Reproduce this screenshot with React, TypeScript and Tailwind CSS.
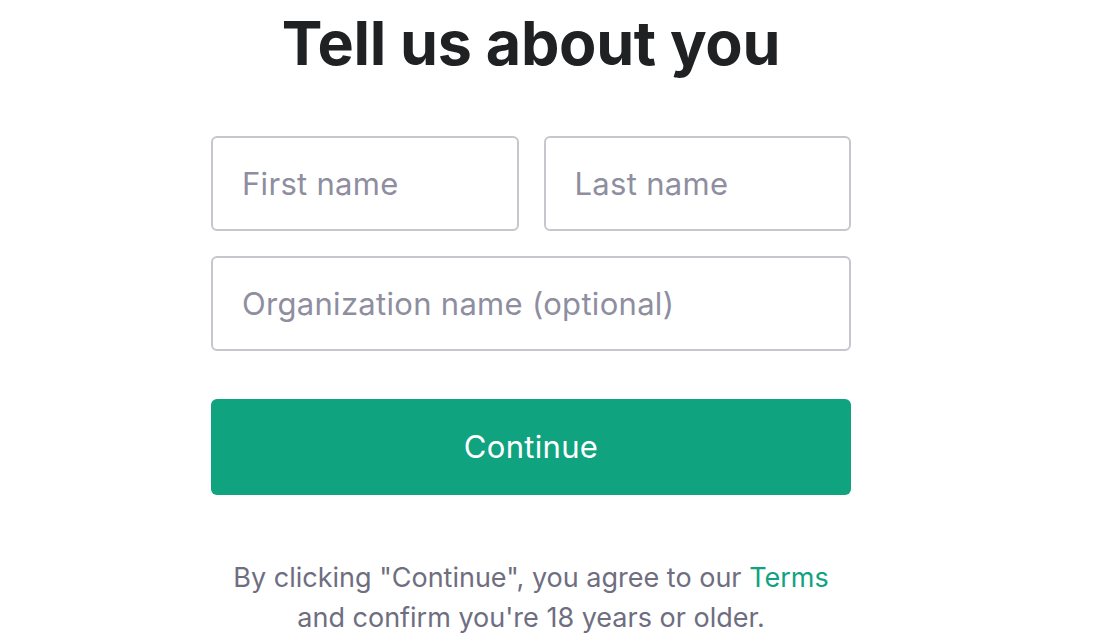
import React, { useState } from 'react'

export default function App() {
  const [first, setFirst] = useState('')
  const [last, setLast] = useState('')
  const [org, setOrg] = useState('')

  const inputCls =
    'h-[95px] w-full rounded-[6px] border-2 border-[#c5c7cc] bg-white px-[29px] text-[31px] tracking-[0.3px] text-[#2d333a] placeholder:text-[#8e8ea0] outline-none focus:border-[#10a37f]'

  return (
    <div className="min-h-screen bg-white font-['Inter',sans-serif]">
      <div className="ml-[211px] flex w-[640px] flex-col">
        {/* Title */}
        <h1 className="mt-[3px] text-center text-[61px] font-bold leading-[80px] tracking-[-0.3px] text-[#202123]">
          Tell us about you
        </h1>

        {/* Name fields */}
        <div className="mt-[53px] grid grid-cols-2 gap-[25px]">
          <input
            className={inputCls}
            placeholder="First name"
            value={first}
            onChange={(e) => setFirst(e.target.value)}
          />
          <input
            className={inputCls}
            placeholder="Last name"
            value={last}
            onChange={(e) => setLast(e.target.value)}
          />
        </div>
        <input
          className={`${inputCls} mt-[25px]`}
          placeholder="Organization name (optional)"
          value={org}
          onChange={(e) => setOrg(e.target.value)}
        />

        {/* Continue */}
        <button className="mt-[48px] h-[96px] w-full rounded-[6px] bg-[#10a37f] text-[31px] tracking-[0.3px] text-white">
          Continue
        </button>

        {/* Legal */}
        <p className="mt-[63px] text-center text-[27px] leading-[40px] text-[#6e6e80]">
          By clicking "Continue", you agree to our{' '}
          <a href="#" className="text-[#10a37f]">
            Terms
          </a>
          <br />
          and confirm you're 18 years or older.
        </p>
      </div>
    </div>
  )
}
